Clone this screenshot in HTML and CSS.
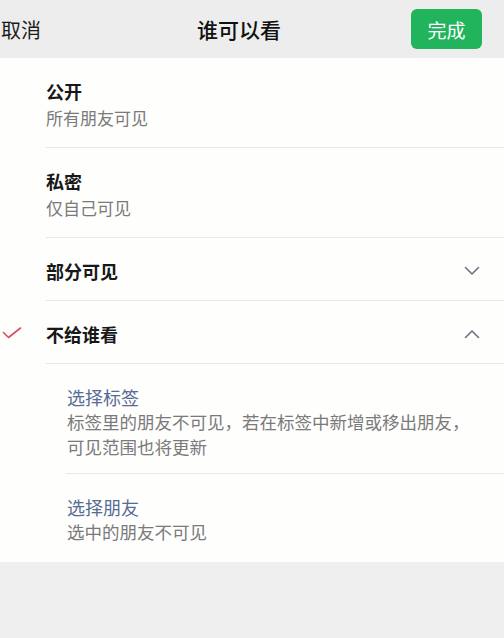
FILE: index.html
```html
<!DOCTYPE html>
<html lang="zh-CN">
<head>
    <meta charset="utf-8">
    <title>谁可以看</title>
    <link rel="stylesheet" href="styles.css">
</head>
<body>
    <div class="page">

        <div class="topbar">
            <span class="cancel">取消</span>
            <span class="title">谁可以看</span>
            <button class="done">完成</button>
        </div>

        <ul class="options">
            <li class="option">
                <div class="mark"></div>
                <div class="option-body">
                    <div class="option-text">
                        <p class="option-title">公开</p>
                        <p class="option-desc">所有朋友可见</p>
                    </div>
                </div>
            </li>
            <li class="option">
                <div class="mark"></div>
                <div class="option-body">
                    <div class="option-text">
                        <p class="option-title">私密</p>
                        <p class="option-desc">仅自己可见</p>
                    </div>
                </div>
            </li>
            <li class="option">
                <div class="mark"></div>
                <div class="option-body single">
                    <div class="option-text">
                        <p class="option-title">部分可见</p>
                    </div>
                    <svg class="chevron" width="16" height="10" viewBox="0 0 16 10"><path d="M1.5 1.5 L8 8 L14.5 1.5" fill="none" stroke="#6e7180" stroke-width="1.6" stroke-linecap="round" stroke-linejoin="round"/></svg>
                </div>
            </li>
            <li class="option">
                <div class="mark">
                    <svg width="20" height="12" viewBox="0 0 20 12"><path d="M1.5 5.5 L6.5 10.5 L18.5 1" fill="none" stroke="#d9505a" stroke-width="1.6" stroke-linecap="round" stroke-linejoin="round"/></svg>
                </div>
                <div class="option-body single">
                    <div class="option-text">
                        <p class="option-title">不给谁看</p>
                    </div>
                    <svg class="chevron" width="16" height="10" viewBox="0 0 16 10"><path d="M1.5 8.5 L8 2 L14.5 8.5" fill="none" stroke="#6e7180" stroke-width="1.6" stroke-linecap="round" stroke-linejoin="round"/></svg>
                </div>
            </li>
        </ul>

        <ul class="sublist">
            <li class="subitem">
                <p class="sub-title">选择标签</p>
                <p class="sub-desc">标签里的朋友不可见，若在标签中新增或移出朋友，<br>可见范围也将更新</p>
            </li>
            <li class="subitem last">
                <p class="sub-title">选择朋友</p>
                <p class="sub-desc">选中的朋友不可见</p>
            </li>
        </ul>

    </div>
</body>
</html>
```

FILE: styles.css
```css
body,html{
    margin: 0;
    padding: 0;
    height: 100%;
}
body{
    background-color: #efefef;
    font-family: "Noto Sans CJK SC", "Noto Sans", sans-serif;
}
p{
    margin: 0;
}
ul{
    list-style: none;
    margin: 0;
    padding: 0;
}
.page{
    width: 504px;
}
.topbar{
    height: 58px;
    background-color: #ededed;
    display: flex;
    align-items: center;
}
.cancel{
    margin-left: 1px;
    font-size: 20px;
    color: #1b1b1b;
}
.title{
    margin-left: 156px;
    font-size: 21px;
    font-weight: 500;
    color: #111;
}
.done{
    margin-left: auto;
    margin-right: 22px;
    width: 71px;
    height: 40px;
    border: none;
    border-radius: 6px;
    background-color: #22b45d;
    color: #fff;
    font-family: inherit;
    font-size: 19px;
    padding: 0;
}
.options, .sublist{
    background-color: #fefefd;
}
.option{
    display: flex;
    align-items: stretch;
}
.mark{
    width: 46px;
    flex-shrink: 0;
    display: flex;
    align-items: center;
    padding-left: 2px;
    box-sizing: border-box;
}
.option-body{
    flex: 1;
    display: flex;
    align-items: center;
    padding: 20px 24px 15px 0;
    border-bottom: 1px solid #e8e8e8;
}
.option-body.single{
    padding-bottom: 16px;
}
.option-text{
    flex: 1;
}
.option-title{
    font-size: 18px;
    line-height: 26px;
    font-weight: 700;
    color: #181818;
}
.option-desc{
    font-size: 17px;
    line-height: 28px;
    color: #7a7a7a;
}
.chevron{
    display: block;
}
.sublist{
    padding-left: 66px;
}
.subitem{
    padding: 21px 0 14px 1px;
    border-bottom: 1px solid #e8e8e8;
}
.subitem.last{
    border-bottom: none;
    padding-bottom: 18px;
}
.sub-title{
    font-size: 18px;
    line-height: 24px;
    color: #576b95;
}
.sub-desc{
    font-size: 17.5px;
    line-height: 25px;
    color: #7a7a7a;
}
```
